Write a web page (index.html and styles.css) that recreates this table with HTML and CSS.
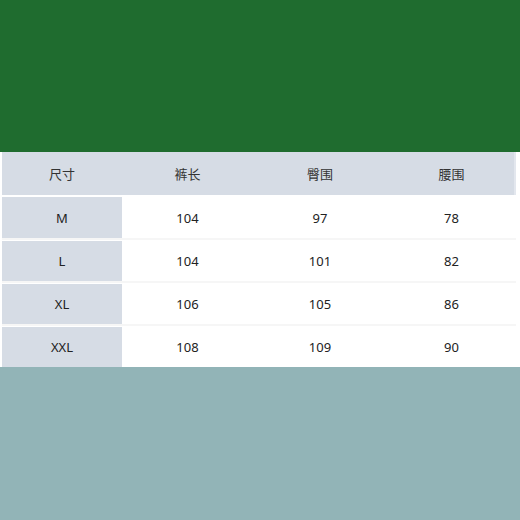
FILE: index.html
```html
<!DOCTYPE html>
<html lang="zh">
<head>
<meta charset="utf-8">
<link rel="stylesheet" href="styles.css">
</head>
<body>
<div class="page">
  <div class="band-green"></div>
  <div class="table">
    <div class="row head">
      <div class="cell c1">尺寸</div>
      <div class="cell c2">裤长</div>
      <div class="cell c3">臀围</div>
      <div class="cell c4">腰围</div>
    </div>
    <div class="row data first">
      <div class="cell c1 size">M</div>
      <div class="cell c2">104</div>
      <div class="cell c3">97</div>
      <div class="cell c4">78</div>
    </div>
    <div class="row data">
      <div class="cell c1 size">L</div>
      <div class="cell c2">104</div>
      <div class="cell c3">101</div>
      <div class="cell c4">82</div>
    </div>
    <div class="row data">
      <div class="cell c1 size">XL</div>
      <div class="cell c2">106</div>
      <div class="cell c3">105</div>
      <div class="cell c4">86</div>
    </div>
    <div class="row data">
      <div class="cell c1 size">XXL</div>
      <div class="cell c2">108</div>
      <div class="cell c3">109</div>
      <div class="cell c4">90</div>
    </div>
  </div>
  <div class="band-teal"></div>
</div>
</body>
</html>
```
FILE: styles.css
```css
html, body {
  margin: 0;
  padding: 0;
  background: #ffffff;
}
.page {
  width: 520px;
  height: 520px;
  display: flex;
  flex-direction: column;
  overflow: hidden;
}
.band-green {
  height: 152px;
  background: #1f6c2f;
  flex: none;
}
.table {
  display: flex;
  flex-direction: column;
  gap: 3px;
  padding: 0 4px 0 2px;
  background: #ffffff;
  flex: none;
}
.row {
  display: grid;
  grid-template-columns: 120px 131px 134px 129px;
  height: 40px;
  font-family: "Noto Sans", "Liberation Sans", "Noto Sans CJK SC", sans-serif;
  font-size: 13px;
  color: #222222;
}
.row.head {
  height: 43px;
  background: #d6dce5;
  border-right: 2px solid #e3e7ee;
  box-sizing: border-box;
  margin-bottom: -1px;
}
.row.head .cell {
  font-family: "Noto Sans CJK SC", sans-serif;
  font-size: 13px;
  color: #333333;
}
.row.first {
  height: 41px;
}
.cell {
  display: flex;
  align-items: center;
  justify-content: center;
}
.size {
  background: #d6dce5;
}
.data {
  box-shadow: 0 2px 0 #f6f6f6;
}
.band-teal {
  flex: 1;
  margin-top: 0;
  background: #92b4b7;
}
.table + .band-teal {
  margin-top: 0;
}
```
